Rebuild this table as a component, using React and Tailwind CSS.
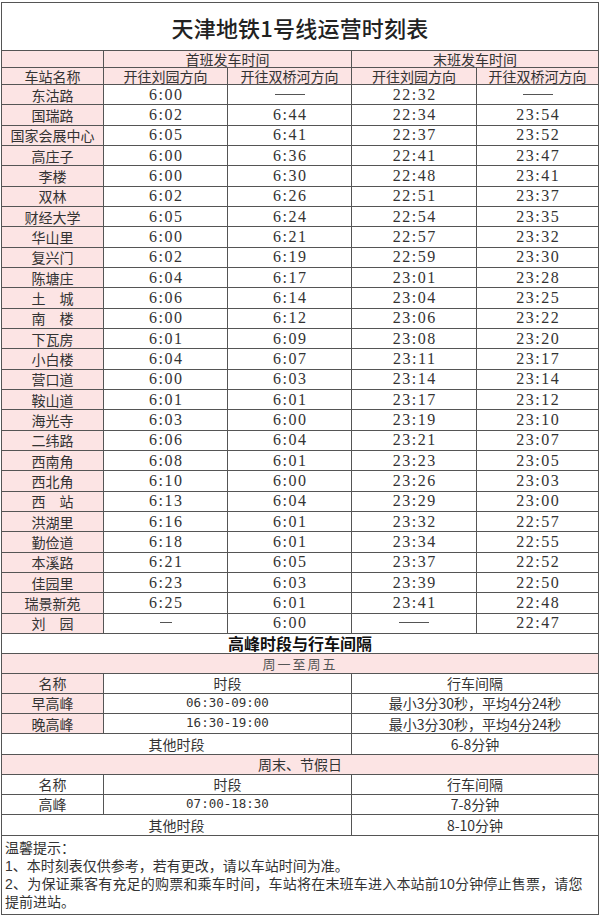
import React from "react";

const rows = [
  ["东沽路", "6:00", "——", "22:32", "——"],
  ["国瑞路", "6:02", "6:44", "22:34", "23:54"],
  ["国家会展中心", "6:05", "6:41", "22:37", "23:52"],
  ["高庄子", "6:00", "6:36", "22:41", "23:47"],
  ["李楼", "6:00", "6:30", "22:48", "23:41"],
  ["双林", "6:02", "6:26", "22:51", "23:37"],
  ["财经大学", "6:05", "6:24", "22:54", "23:35"],
  ["华山里", "6:00", "6:21", "22:57", "23:32"],
  ["复兴门", "6:02", "6:19", "22:59", "23:30"],
  ["陈塘庄", "6:04", "6:17", "23:01", "23:28"],
  ["土　城", "6:06", "6:14", "23:04", "23:25"],
  ["南　楼", "6:00", "6:12", "23:06", "23:22"],
  ["下瓦房", "6:01", "6:09", "23:08", "23:20"],
  ["小白楼", "6:04", "6:07", "23:11", "23:17"],
  ["营口道", "6:00", "6:03", "23:14", "23:14"],
  ["鞍山道", "6:01", "6:01", "23:17", "23:12"],
  ["海光寺", "6:03", "6:00", "23:19", "23:10"],
  ["二纬路", "6:06", "6:04", "23:21", "23:07"],
  ["西南角", "6:08", "6:01", "23:23", "23:05"],
  ["西北角", "6:10", "6:00", "23:26", "23:03"],
  ["西　站", "6:13", "6:04", "23:29", "23:00"],
  ["洪湖里", "6:16", "6:01", "23:32", "22:57"],
  ["勤俭道", "6:18", "6:01", "23:34", "22:55"],
  ["本溪路", "6:21", "6:05", "23:37", "22:52"],
  ["佳园里", "6:23", "6:03", "23:39", "22:50"],
  ["瑞景新苑", "6:25", "6:01", "23:41", "22:48"],
  ["刘　园", "—", "6:00", "——", "22:47"],
];

function TimeCell({ v, last }) {
  return (
    <div
      className={
        "flex items-center justify-center " +
        (last ? "" : "border-r border-[#555] ")
      }
    >
      {v === "——" ? (
        <span className="block w-[30px] h-[1px] bg-[#555] mb-[1px]"></span>
      ) : v === "—" ? (
        <span className="block w-[12px] h-[1px] bg-[#555] mb-[1px]"></span>
      ) : (
        <span className="font-['Liberation_Serif','Noto_Sans_CJK_SC',serif] text-[16px] leading-none tracking-[1.5px] text-[#333] pl-[1.5px]">
          {v}
        </span>
      )}
    </div>
  );
}

export default function App() {
  const cjk = "font-['Noto_Sans_CJK_SC',sans-serif]";
  const grid5 = "grid grid-cols-[102px_124px_124px_125px_121px]";
  const grid3 = "grid grid-cols-[102px_248px_246px]";
  const grid2 = "grid grid-cols-[350px_246px]";
  const cell = "flex items-center justify-center border-r border-[#555]";
  const cellLast = "flex items-center justify-center";
  const mono = "font-['DejaVu_Sans_Mono',monospace] text-[12.5px] leading-none";
  return (
    <div className={"w-[600px] h-[917px] bg-white pt-[2px] pl-[1px] text-[#333] " + cjk}>
      <div className="w-[598px] border border-[#555] flex flex-col text-[14px] leading-none">
        {/* Title */}
        <div className="h-[48px] border-b border-[#555] flex items-center justify-center">
          <span className="text-[22px] font-medium text-[#222] tracking-[0.2px]">
            天津地铁1号线运营时刻表
          </span>
        </div>
        {/* Header 1 */}
        <div className={grid5 + " h-[17px] border-b border-[#555] bg-[#fce4e4]"}>
          <div className={cell}></div>
          <div className={"col-span-2 " + cell}>首班发车时间</div>
          <div className={"col-span-2 " + cellLast}>末班发车时间</div>
        </div>
        {/* Header 2 */}
        <div className={grid5 + " h-[17px] border-b border-[#555] bg-[#fce4e4]"}>
          <div className={cell}>车站名称</div>
          <div className={cell}>开往刘园方向</div>
          <div className={cell}>开往双桥河方向</div>
          <div className={cell}>开往刘园方向</div>
          <div className={cellLast}>开往双桥河方向</div>
        </div>
        {rows.map((r) => (
          <div key={r[0]} className={grid5 + " h-[20.33px] border-b border-[#555]"}>
            <div className={cell + " bg-[#fce4e4] text-[14px] text-[#333]"}>{r[0]}</div>
            <TimeCell v={r[1]} />
            <TimeCell v={r[2]} />
            <TimeCell v={r[3]} />
            <TimeCell v={r[4]} last />
          </div>
        ))}
        {/* Peak section */}
        <div className="h-[20px] border-b border-[#555] flex items-center justify-center">
          <span className="text-[16px] font-bold text-[#111]">高峰时段与行车间隔</span>
        </div>
        <div className="h-[20px] border-b border-[#555] bg-[#fce4e4] flex items-center justify-center">
          <span className="text-[13px] tracking-[2px] text-[#555]">周一至周五</span>
        </div>
        <div className={grid3 + " h-[20px] border-b border-[#555]"}>
          <div className={cell + " bg-[#fce4e4]"}>名称</div>
          <div className={cell}>时段</div>
          <div className={cellLast}>行车间隔</div>
        </div>
        <div className={grid3 + " h-[20px] border-b border-[#555]"}>
          <div className={cell + " bg-[#fce4e4]"}>早高峰</div>
          <div className={cell}><span className={mono}>06:30-09:00</span></div>
          <div className={cellLast}>最小3分30秒，平均4分24秒</div>
        </div>
        <div className={grid3 + " h-[20.5px] border-b border-[#555]"}>
          <div className={cell + " bg-[#fce4e4]"}>晚高峰</div>
          <div className={cell}><span className={mono}>16:30-19:00</span></div>
          <div className={cellLast}>最小3分30秒，平均4分24秒</div>
        </div>
        <div className={grid2 + " h-[20.5px] border-b border-[#555]"}>
          <div className={cell}>其他时段</div>
          <div className={cellLast}>6-8分钟</div>
        </div>
        <div className="h-[20px] border-b border-[#555] bg-[#fce4e4] flex items-center justify-center">
          <span className="text-[14px] text-[#333]">周末、节假日</span>
        </div>
        <div className={grid3 + " h-[20px] border-b border-[#555]"}>
          <div className={cell}>名称</div>
          <div className={cell}>时段</div>
          <div className={cellLast}>行车间隔</div>
        </div>
        <div className={grid3 + " h-[20px] border-b border-[#555]"}>
          <div className={cell}>高峰</div>
          <div className={cell}><span className={mono}>07:00-18:30</span></div>
          <div className={cellLast}>7-8分钟</div>
        </div>
        <div className={grid2 + " h-[21px] border-b border-[#555]"}>
          <div className={cell}>其他时段</div>
          <div className={cellLast}>8-10分钟</div>
        </div>
        {/* Notes */}
        <div className="pl-[3px] pt-[3px] pb-[3px] font-['Liberation_Sans','Noto_Sans_CJK_SC',sans-serif] text-[14px] leading-[18px] text-[#333] whitespace-nowrap">
          <div>温馨提示：</div>
          <div>1、本时刻表仅供参考，若有更改，请以车站时间为准。</div>
          <div className="tracking-[0.2px]">2、为保证乘客有充足的购票和乘车时间，车站将在末班车进入本站前10分钟停止售票，请您</div>
          <div>提前进站。</div>
        </div>
      </div>
    </div>
  );
}
